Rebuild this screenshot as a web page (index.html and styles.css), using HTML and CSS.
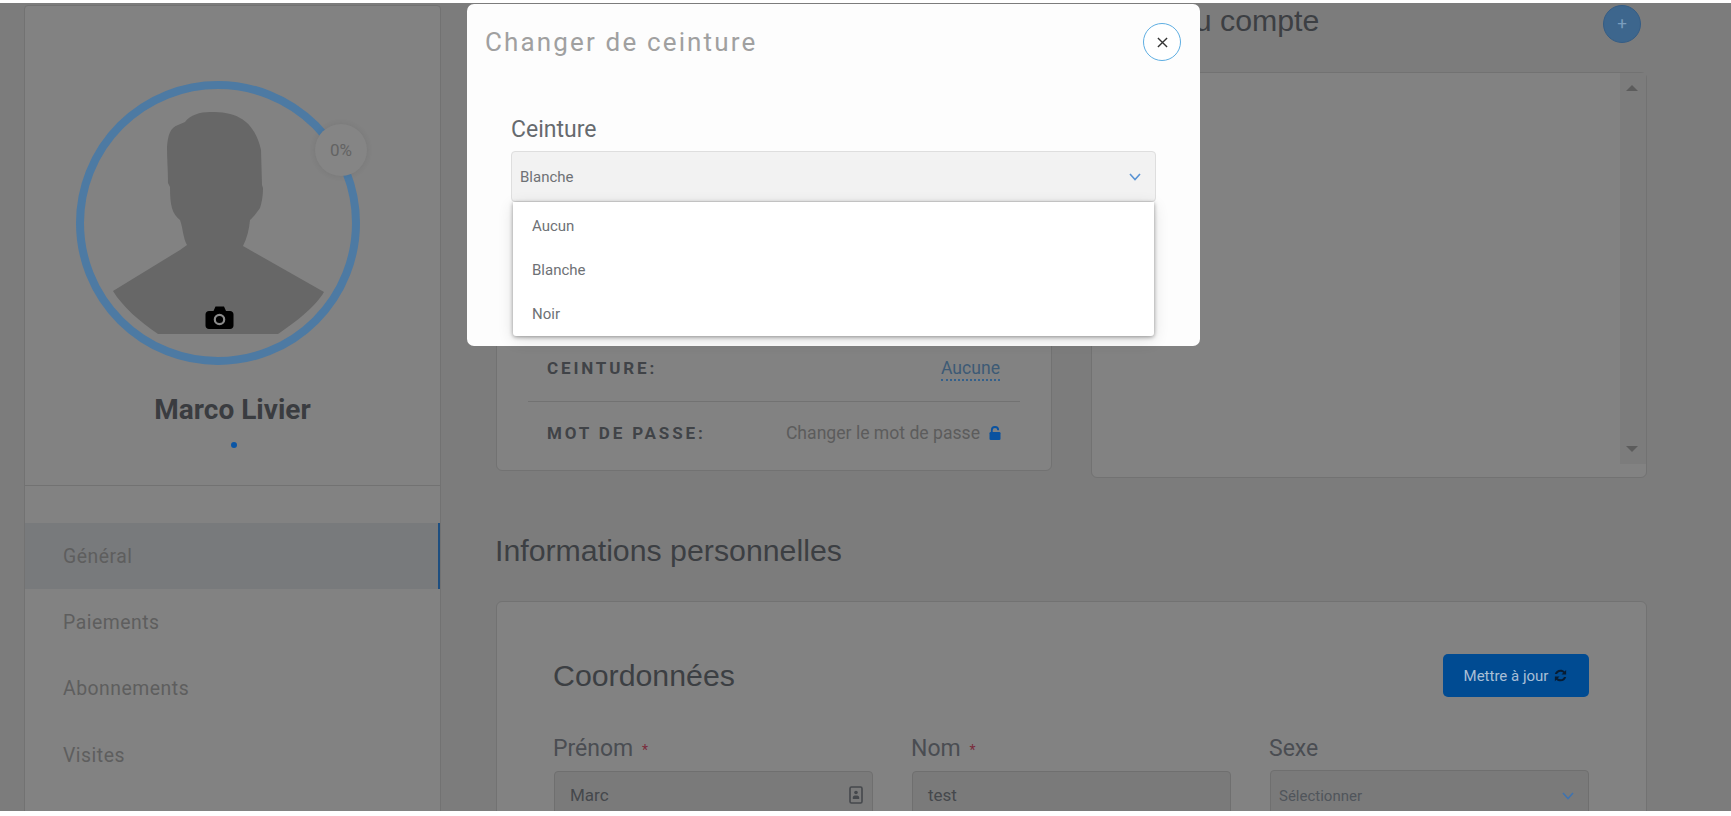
FILE: index.html
```html
<!DOCTYPE html>
<html lang="fr">
<head>
<meta charset="utf-8">
<title>Changer de ceinture</title>
<link rel="stylesheet" href="styles.css">
</head>
<body>
<div class="page">
  <aside class="sidebar">
    <div class="avatar">
      <svg class="avatar-art" viewBox="76 81 284 284" width="284" height="284">
        <path class="silhouette" d="M113 291L180 250L187 245C183 238 183 228 180 220C172 214 170 205 170 187L168 183C168 170 167 160 167 147C168 135 170 128 178 125L185 122C190 115 200 112 210 112C222 112 232 113 240 118C250 123 258 135 261 150L262 185L263 188C263 198 261 205 260 208C256 214 252 218 250 220C249 230 247 238 243 246L250 250L324 292C316 306 296 322 278 334L158 334C140 322 122 306 113 291Z"/>
        <circle class="ring" cx="218" cy="223" r="138"/>
        <path class="camera-body" d="M209 311H213.500L215.500 306.500H224L226 311H230C232 311 233.500 312.500 233.500 314.500V325.500C233.500 327.500 232 329 230 329H209C207 329 205.500 327.500 205.500 325.500V314.500C205.500 312.500 207 311 209 311Z"/>
        <circle class="camera-lens" cx="219.500" cy="319.500" r="4.700"/>
      </svg>
      <div class="percent">0%</div>
    </div>
    <h2 class="name">Marco Livier</h2>
    <div class="status-dot"></div>
    <nav class="menu">
      <a class="menu-item active">Général</a>
      <a class="menu-item">Paiements</a>
      <a class="menu-item">Abonnements</a>
      <a class="menu-item">Visites</a>
    </nav>
  </aside>

  <main class="content">
    <div class="top-row">
      <section class="info-card">
        <div class="info-row">
          <span class="info-label">CEINTURE:</span>
          <a class="info-link">Aucune</a>
        </div>
        <div class="info-row">
          <span class="info-label">MOT DE PASSE:</span>
          <span class="info-value">Changer le mot de passe
            <svg class="lock" viewBox="0 0 12 14" width="12" height="14"><path class="shackle" d="M2.800 7V4.200C2.800 2.300 4.100 1 6 1S9.200 2.300 9.200 4.200"/><rect x="0.500" y="6" width="11" height="8" rx="1.300"/></svg>
          </span>
        </div>
      </section>
      <section class="account">
        <div class="account-head">
          <h2 class="section-title">Solde du compte</h2>
          <button class="add-btn">+</button>
        </div>
        <div class="log-card">
          <div class="scrollbar">
            <span class="arrow-up"></span>
            <span class="arrow-down"></span>
          </div>
        </div>
      </section>
    </div>

    <h2 class="section-title personal-title">Informations personnelles</h2>

    <section class="details-card">
      <div class="details-head">
        <h2 class="section-title">Coordonnées</h2>
        <button class="save-btn">Mettre à jour
          <svg class="sync" viewBox="0 0 16 16" width="15" height="15"><path d="M2 6.500C2.600 3.600 5 1.800 8 1.800C9.800 1.800 11.300 2.500 12.400 3.600L14 2V7H9L11 5C10.200 4.300 9.200 3.900 8 3.900C6.300 3.900 4.900 4.900 4.300 6.500ZM14 9.500C13.400 12.400 11 14.200 8 14.200C6.200 14.200 4.700 13.500 3.600 12.400L2 14V9H7L5 11C5.800 11.700 6.800 12.100 8 12.100C9.700 12.100 11.100 11.100 11.700 9.500Z"/></svg>
        </button>
      </div>
      <div class="fields">
        <div class="field">
          <label class="field-label">Prénom <span class="req">*</span></label>
          <div class="input">
            <span>Marc</span>
            <svg class="contact" viewBox="0 0 14 18" width="14" height="18"><rect x="1" y="1" width="12" height="16" rx="1.500"/><circle cx="7" cy="6.500" r="1.800"/><path d="M3.800 13V11.500C3.800 10 5 9.500 7 9.500S10.200 10 10.200 11.500V13Z"/></svg>
          </div>
        </div>
        <div class="field">
          <label class="field-label">Nom <span class="req">*</span></label>
          <div class="input"><span>test</span></div>
        </div>
        <div class="field">
          <label class="field-label">Sexe</label>
          <div class="input select-input">
            <span>Sélectionner</span>
            <svg class="chevron" viewBox="0 0 12 8" width="12" height="8"><path d="M1 1L6 6.500L11 1"/></svg>
          </div>
        </div>
      </div>
    </section>
  </main>
</div>

<div class="modal">
  <header class="modal-head">
    <h3 class="modal-title">Changer de ceinture</h3>
    <button class="close-btn" aria-label="Fermer">
      <svg viewBox="0 0 12 12" width="11" height="11"><path d="M1 1L11 11M11 1L1 11"/></svg>
    </button>
  </header>
  <div class="modal-body">
    <label class="modal-label">Ceinture</label>
    <div class="modal-select">
      <span>Blanche</span>
      <svg class="chevron" viewBox="0 0 12 8" width="12" height="8"><path d="M1 1L6 6.500L11 1"/></svg>
      <ul class="dropdown">
        <li>Aucun</li>
        <li>Blanche</li>
        <li>Noir</li>
      </ul>
    </div>
  </div>
</div>
</body>
</html>
```
FILE: styles.css
```css
* { box-sizing: border-box; }
html, body { margin: 0; height: 816px; overflow: hidden; background: #fff; }
body { position: relative; font-family: Roboto, "Liberation Sans", sans-serif; }
h2, h3, ul { margin: 0; padding: 0; font-weight: 400; }
button { font-family: inherit; cursor: pointer; }

.page {
  margin-top: 3px;
  height: 808px;
  overflow: hidden;
  background: #7c7c7c;
  display: flex;
  align-items: flex-start;
  gap: 55px;
  padding: 0 0 0 24px;
}

/* Sidebar */
.sidebar {
  flex: 0 0 417px;
  height: 900px;
  margin-top: 2px;
  background: #828282;
  border: 1px solid #727272;
  border-radius: 4px;
  padding-top: 75px;
}
.avatar { position: relative; width: 284px; height: 284px; margin-left: 51px; }
.avatar-art { display: block; }
.silhouette { fill: #676767; }
.ring { fill: none; stroke: #4d7aa3; stroke-width: 8; }
.camera-body { fill: #000; }
.camera-lens { fill: #000; stroke: #8a8a8a; stroke-width: 2.200; }
.percent {
  position: absolute;
  left: 239px;
  top: 43px;
  width: 52px;
  height: 52px;
  border-radius: 50%;
  background: #858585;
  box-shadow: 0 0 6px rgba(0, 0, 0, .08);
  color: #636363;
  font-size: 17px;
  display: flex;
  align-items: center;
  justify-content: center;
}
.name {
  margin-top: 28px;
  line-height: 34px;
  text-align: center;
  font-size: 28px;
  font-weight: 700;
  color: #3a3c40;
}
.status-dot {
  width: 6px;
  height: 6px;
  margin: 15px 0 37px 206px;
  border-radius: 50%;
  background: #0a55a5;
}
.menu { border-top: 1px solid #727272; padding-top: 37px; }
.menu-item {
  display: flex;
  align-items: center;
  height: 66.300px;
  padding-left: 38px;
  font-size: 19.400px;
  letter-spacing: .5px;
  color: #5e5e5e;
}
.menu-item.active { background: #787a7c; border-right: 2px solid #1d4e80; }

/* Main column */
.content { flex: 0 0 1151px; }
.top-row { display: flex; align-items: flex-start; gap: 39px; }
.section-title {
  font-family: "Liberation Sans", Arial, sans-serif;
  font-size: 30.300px;
  line-height: 36px;
  color: #3c3f43;
  margin-left: -1px;
}

.info-card {
  flex: 0 0 556px;
  height: 399px;
  margin-top: 69px;
  background: #828282;
  border: 1px solid #727272;
  border-radius: 6px;
  padding: 0 31px 7px;
  display: flex;
  flex-direction: column;
  justify-content: flex-end;
}
.info-row {
  height: 66px;
  padding: 0 19px;
  display: flex;
  align-items: center;
  justify-content: space-between;
}
.info-row + .info-row { height: 62px; border-top: 1px solid #727272; }
.info-label {
  font-size: 17px;
  font-weight: 700;
  letter-spacing: 2.850px;
  color: #404347;
}
.info-link {
  margin: 2px 1px 0 0;
  color: #3d5a75;
  font-size: 17.600px;
  line-height: 21px;
  border-bottom: 2px dotted #35618c;
}
.info-value {
  display: flex;
  align-items: center;
  gap: 9px;
  color: #5c5c5c;
  font-size: 17.600px;
}
.lock { fill: #0a52a0; }
.shackle { fill: none; stroke: #0a52a0; stroke-width: 1.800; }

.account { flex: 0 0 556px; }
.account-head {
  height: 69px;
  padding: 0 6px 0 2px;
  display: flex;
  align-items: flex-start;
  justify-content: space-between;
}
.add-btn {
  width: 38px;
  height: 38px;
  margin-top: 2px;
  padding: 0 0 2px;
  border-radius: 50%;
  border: 1px solid #355d85;
  background: #3d668d;
  color: #7a9dbd;
  font-size: 17px;
}
.log-card {
  height: 406px;
  background: #828282;
  border: 1px solid #727272;
  border-radius: 6px;
  display: flex;
  justify-content: flex-end;
}
.scrollbar {
  width: 26px;
  height: 391px;
  background: #7c7c7c;
  padding: 12px 2px 12px 0;
  display: flex;
  flex-direction: column;
  align-items: center;
  justify-content: space-between;
}
.arrow-up, .arrow-down { width: 0; height: 0; border-left: 6px solid transparent; border-right: 6px solid transparent; }
.arrow-up { border-bottom: 6px solid #5c5c5c; }
.arrow-down { border-top: 6px solid #5c5c5c; }

.personal-title { margin-top: 55px; }

.details-card {
  margin-top: 32px;
  height: 300px;
  background: #828282;
  border: 1px solid #727272;
  border-radius: 6px;
  padding: 51px 57px 0;
}
.details-head { display: flex; align-items: center; justify-content: space-between; height: 44px; padding-top: 1px; }
.save-btn {
  width: 146px;
  height: 43px;
  border: 0;
  border-radius: 5px;
  background: #004b92;
  color: #a9bfd6;
  font-size: 15px;
  display: flex;
  align-items: center;
  justify-content: center;
  gap: 5px;
}
.sync { fill: #071c33; }

.fields { display: grid; grid-template-columns: 1fr 1fr 1fr; gap: 39px; margin-top: 36px; }
.field-label { display: block; margin: 1px 0 6px -1px; font-size: 23px; line-height: 30px; color: #4a4d52; }
.req { color: #7a2c3c; font-size: 14px; margin-left: 3px; vertical-align: 1px; }
.input {
  height: 48px;
  background: #7a7a7a;
  border: 1px solid #6f6f6f;
  border-radius: 4px;
  padding: 0 9px 0 15px;
  display: flex;
  align-items: center;
  justify-content: space-between;
  font-size: 17px;
  color: #45484c;
}
.select-input { height: 51px; padding: 0 14px 0 8px; font-size: 15px; color: #50555b; }
.select-input .chevron { stroke: #3f73b0; }
.contact { fill: none; stroke: #45484c; stroke-width: 1.600; }
.contact circle, .contact path { fill: #45484c; stroke: none; }
.chevron { fill: none; stroke: #5a94d4; stroke-width: 1.600; }

/* Modal */
.modal {
  position: absolute;
  left: 467px;
  top: 4px;
  width: 733px;
  height: 342px;
  background: #fdfdfd;
  border-radius: 7px;
}
.modal-head {
  display: flex;
  align-items: center;
  justify-content: space-between;
  padding: 19px 19px 0 18px;
}
.modal-title { font-size: 26px; letter-spacing: 2.150px; color: #a0a0a0; }
.close-btn {
  width: 38px;
  height: 38px;
  padding: 0;
  border-radius: 50%;
  border: 1px solid #5eaee2;
  background: #fff;
  display: flex;
  align-items: center;
  justify-content: center;
}
.close-btn svg { fill: none; stroke: #333; stroke-width: 1.500; }
.modal-body { padding: 0 44px; margin-top: 54px; }
.modal-label { display: block; font-size: 23px; line-height: 30px; color: #666a6e; margin-bottom: 6px; }
.modal-select {
  position: relative;
  height: 51px;
  background: #f2f2f2;
  border: 1px solid #dedede;
  border-radius: 4px;
  padding: 0 14px 0 8px;
  display: flex;
  align-items: center;
  justify-content: space-between;
  font-size: 15px;
  color: #6e7175;
}
.dropdown {
  position: absolute;
  left: 1px;
  right: 1px;
  top: 50px;
  height: 134px;
  list-style: none;
  background: #fff;
  border-radius: 0 0 3px 3px;
  box-shadow: 0 1px 4px rgba(0, 0, 0, .4), 0 4px 16px rgba(0, 0, 0, .12);
  padding-top: 2px;
}
.dropdown li { height: 44px; line-height: 44px; padding-left: 19px; }
```
